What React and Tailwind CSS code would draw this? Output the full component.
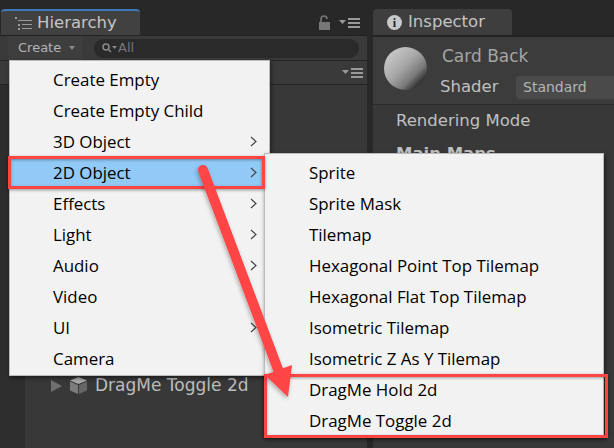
import React from "react";

const menuFont = { fontFamily: '"Open Sans", "Noto Sans", sans-serif' };

const mainItems = [
    { label: "Create Empty" },
    { label: "Create Empty Child" },
    { label: "3D Object", sub: true },
    { label: "2D Object", sub: true, active: true },
    { label: "Effects", sub: true },
    { label: "Light", sub: true },
    { label: "Audio", sub: true },
    { label: "Video" },
    { label: "UI", sub: true },
    { label: "Camera" },
];

const subItems = [
    "Sprite",
    "Sprite Mask",
    "Tilemap",
    "Hexagonal Point Top Tilemap",
    "Hexagonal Flat Top Tilemap",
    "Isometric Tilemap",
    "Isometric Z As Y Tilemap",
    "DragMe Hold 2d",
    "DragMe Toggle 2d",
];

const MenuLines = () => (
    <svg width="22" height="10" viewBox="0 0 22 10" fill="#9a9a9a">
        <path d="M0 2h7L3.5 6z" />
        <rect x="9" y="0" width="12" height="2" />
        <rect x="9" y="4" width="12" height="2" />
        <rect x="9" y="8" width="12" height="2" />
    </svg>
);

const Arrow = () => (
    <svg className="absolute left-0 top-0 pointer-events-none" width="614" height="448" viewBox="0 0 614 448">
        <defs>
            <filter id="arrowShadow" x="-20%" y="-20%" width="140%" height="140%">
                <feDropShadow dx="-1" dy="2" stdDeviation="2" floodColor="#000" floodOpacity="0.3" />
            </filter>
        </defs>
        <g filter="url(#arrowShadow)" fill="#ff4444">
            <path d="M203 170 L279 372" stroke="#ff4444" strokeWidth="10" strokeLinecap="round" />
            <path d="M265 375 L292 365 L288 397 Z" />
        </g>
    </svg>
);

const App = () => {
    return (
        <div className="relative w-[614px] h-[448px] overflow-hidden bg-[#282828] flex gap-[6px] font-['DejaVu_Sans',sans-serif]">
            {/* Hierarchy panel */}
            <div className="w-[367px] shrink-0 flex flex-col">
                <div className="h-[35px] pt-[9px] pl-px flex justify-between">
                    <div className="w-[139px] h-[26px] bg-[#414141] border-t-2 border-[#3d7ab8] rounded-t-sm flex items-center gap-[5px] pl-[14px] pt-[1px] text-[#c4c4c4] text-[16.5px]">
                        <svg width="17" height="13" viewBox="0 0 17 13" fill="#9a9a9a">
                            <rect x="0" y="0" width="2" height="2" />
                            <rect x="3" y="3" width="14" height="1" />
                            <rect x="3" y="7" width="2" height="2" />
                            <rect x="7" y="7" width="10" height="1" />
                            <rect x="3" y="11" width="2" height="2" />
                            <rect x="7" y="11" width="10" height="1" />
                        </svg>
                        <span>Hierarchy</span>
                    </div>
                    <div className="flex items-center gap-[9px] pr-[6px] pt-[1px]">
                        <svg width="11" height="15" viewBox="0 0 11 15">
                            <path d="M2 7V4a3 3 0 0 1 6 0" fill="none" stroke="#777" strokeWidth="1.6" />
                            <rect x="0" y="7" width="11" height="8" fill="#777" />
                        </svg>
                        <MenuLines />
                    </div>
                </div>
                <div className="h-[25px] bg-[#3a3a3a] border-t border-[#222] flex items-center pl-[8px] pr-[8px]">
                    <div className="w-[74px] h-full flex items-center gap-[8px] pl-[10px] bg-[#3e3e3e] text-[#b5b5b5] text-[13px]">
                        <span>Create</span>
                        <span className="w-0 h-0 border-x-[3px] border-x-transparent border-t-[4px] border-t-[#8a8a8a]"></span>
                    </div>
                    <div className="flex-1 h-[19px] ml-[12px] rounded-full bg-[#2a2a2a] flex items-center pl-[8px] gap-[1px] text-[#777] text-[13px]">
                        <svg width="15" height="10" viewBox="0 0 15 10" fill="none">
                            <circle cx="4" cy="4" r="3" stroke="#8a8a8a" strokeWidth="1.5" />
                            <path d="M6 6l3 3" stroke="#8a8a8a" strokeWidth="1.5" />
                            <path d="M10 3h5l-2.5 3z" fill="#8a8a8a" />
                        </svg>
                        <span>All</span>
                    </div>
                </div>
                <div className="h-[25px] bg-[#3a3a3a] border-y border-[#252525] flex items-center justify-end pr-[3px]">
                    <MenuLines />
                </div>
                <div className="flex-1 flex">
                    <div className="w-[25px] bg-[#2e2e2e]"></div>
                    <div className="flex-1 bg-[#383838] relative">
                        <div className="mt-[288px] ml-[26px] flex items-center gap-[7px] text-[#bdbdbd] text-[17px]">
                            <span className="w-0 h-0 border-y-[6px] border-y-transparent border-l-[11px] border-l-[#6f6f6f]"></span>
                            <svg width="19" height="19" viewBox="0 0 19 19">
                                <path d="M9.5 1L18 4.5 9.5 8 1 4.5z" fill="#a8a8a8" />
                                <path d="M1 5.5L9 9v9L1 14.5z" fill="#7c7c7c" />
                                <path d="M18 5.5L10 9v9l8-3.5z" fill="#666" />
                            </svg>
                            <span>DragMe Toggle 2d</span>
                        </div>
                    </div>
                </div>
            </div>

            {/* Inspector panel */}
            <div className="flex-1 min-w-0 flex flex-col">
                <div className="h-[35px] pt-[9px]">
                    <div className="w-[139px] h-[26px] bg-[#3e3e3e] rounded-t-sm flex items-center gap-[6px] pl-[14px] pt-[1px] text-[#c4c4c4] text-[16.5px]">
                        <span className="w-[15px] h-[15px] rounded-full bg-[#c8c8c8] text-[#222] text-[12px] font-bold flex items-center justify-center font-['Liberation_Serif',serif]">i</span>
                        <span>Inspector</span>
                    </div>
                </div>
                <div className="h-[70px] bg-[#3c3c3c] border-t-2 border-[#222] border-b border-b-[#2a2a2a] flex pl-[11px] pt-[10px]">
                    <div className="w-[43px] h-[43px] shrink-0 rounded-full bg-[linear-gradient(135deg,#d4d4d4,#a8a8a8_45%,#7a7a7a_68%,#3a3a3a_82%,#222)]"></div>
                    <div className="ml-[13px] flex-1 min-w-0 flex flex-col">
                        <div className="pl-[2px] text-[#a5a5a5] text-[17px] leading-[22px] -mt-[2px]">Card Back</div>
                        <div className="flex items-center gap-[15px] mt-[8px]">
                            <span className="text-[#c0c0c0] text-[16.5px] w-[61px] shrink-0">Shader</span>
                            <div className="flex-1 h-[23px] bg-[#4a4a4a] rounded-l-sm pl-[7px] text-[#b5b5b5] text-[14px] leading-[23px]">Standard</div>
                        </div>
                    </div>
                </div>
                <div className="flex-1 bg-[#383838] pl-[23px] pt-[3px] text-[#c0c0c0] text-[16.5px]">
                    <div className="leading-[26px]">Rendering Mode</div>
                    <div className="mt-[10px] leading-[20px] font-bold">Main Maps</div>
                </div>
            </div>

            {/* Context menu */}
            <div
                className="absolute left-[9px] top-[60px] w-[261px] h-[316px] pt-[3px] bg-[#f2f2f2] border border-[#bbb] shadow-[1px_2px_4px_rgba(0,0,0,0.5)] text-black text-[16.9px]"
                style={menuFont}
            >
                {mainItems.map((item) => (
                    <div
                        key={item.label}
                        className={`h-[31px] flex items-center justify-between pl-[43px] pr-[12px] ${item.active ? "bg-[#91c9f7]" : ""}`}
                    >
                        <span>{item.label}</span>
                        {item.sub && (
                            <svg width="7" height="11" viewBox="0 0 7 11" fill="none">
                                <path d="M1 1l5 4.5L1 10" stroke="#444" strokeWidth="1.2" />
                            </svg>
                        )}
                    </div>
                ))}
            </div>

            {/* Submenu */}
            <div
                className="absolute left-[264px] top-[153px] w-[340px] h-[284px] pt-[3px] bg-[#f2f2f2] border border-[#bbb] shadow-[1px_2px_4px_rgba(0,0,0,0.5)] text-black text-[16.9px]"
                style={menuFont}
            >
                {subItems.map((label) => (
                    <div key={label} className="h-[31px] flex items-center pl-[44px]">
                        {label}
                    </div>
                ))}
            </div>

            {/* Annotations */}
            <div className="absolute left-[8px] top-[156px] w-[257px] h-[33px] border-[3px] border-[#ff4444] shadow-[0_1px_3px_rgba(0,0,0,0.4),inset_0_1px_3px_rgba(0,0,0,0.35)]"></div>
            <div className="absolute left-[264px] top-[374px] w-[344px] h-[64px] border-[3px] border-[#ff4444] shadow-[0_1px_3px_rgba(0,0,0,0.4),inset_0_1px_3px_rgba(0,0,0,0.35)]"></div>
            <Arrow />
        </div>
    );
};

export default App;
